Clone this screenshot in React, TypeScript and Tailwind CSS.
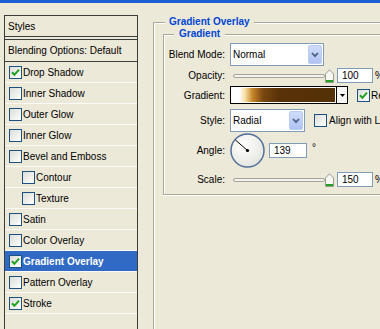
import React from "react";

function Check({ on }: { on?: boolean }) {
  return (
    <span className="w-[13px] h-[13px] shrink-0 border border-[#1c5180] bg-linear-to-br from-[#dcdcd7] to-white flex items-center justify-center">
      {on && (
        <svg width="9" height="9" viewBox="0 0 9 9">
          <path d="M1 4.2 L3.4 6.8 L8 1.6" stroke="#21a121" strokeWidth="2" fill="none" />
        </svg>
      )}
    </span>
  );
}

function Item({ label, on, indent, active }: { label: string; on?: boolean; indent?: boolean; active?: boolean }) {
  return (
    <div
      className={
        "h-[21px] flex items-center gap-[1px] border-b border-[#fbfbf7] " +
        (indent ? "pl-[17px] " : "pl-[4px] ") +
        (active ? "bg-[#316ac5] text-white font-bold" : "")
      }
    >
      <Check on={on} />
      <span className="whitespace-nowrap">{label}</span>
    </div>
  );
}

function Label({ children }: { children: React.ReactNode }) {
  return <div className="w-[61px] shrink-0 text-right whitespace-nowrap">{children}</div>;
}

function Combo({ text, w }: { text: string; w: string }) {
  return (
    <div className={w + " shrink-0 h-[23px] border border-[#7f9db9] bg-white flex items-center pl-[2px] pr-[1px]"}>
      <span>{text}</span>
      <span className="ml-auto w-[14px] h-[19px] rounded-[2px] border border-[#bccbf0] bg-linear-to-b from-[#cfdcfa] to-[#afc3f3] flex items-center justify-center">
        <svg width="8" height="6" viewBox="0 0 8 6">
          <path d="M1 1 L4 4.2 L7 1" stroke="#4d6185" strokeWidth="1.8" fill="none" />
        </svg>
      </span>
    </div>
  );
}

function Field({ value, w = "w-[36px]" }: { value: string; w?: string }) {
  return (
    <div className={w + " h-[15px] border border-[#7f9db9] bg-white flex items-center pl-[4px] leading-none"}>
      {value}
    </div>
  );
}

function Slider() {
  return (
    <div className="flex items-center ml-[3px] shrink-0">
      <div className="w-[92px] h-[4px] rounded-[2px] border border-[#a5a39c] bg-[#f4f3ee]" />
      <svg width="9" height="14" viewBox="0 0 9 14">
        <path d="M0.5 5 L4.5 0.8 L8.5 5 V13.5 H0.5 Z" fill="#f7f7f4" stroke="#9a9a92" />
        <rect x="1" y="11" width="7" height="2" fill="#21a121" />
      </svg>
    </div>
  );
}

export default function App() {
  const rows = [
    { label: "Drop Shadow", on: true },
    { label: "Inner Shadow" },
    { label: "Outer Glow" },
    { label: "Inner Glow" },
    { label: "Bevel and Emboss" },
    { label: "Contour", indent: true },
    { label: "Texture", indent: true },
    { label: "Satin" },
    { label: "Color Overlay" },
    { label: "Gradient Overlay", on: true, active: true },
    { label: "Pattern Overlay" },
    { label: "Stroke", on: true },
  ];

  return (
    <div className="w-[380px] h-[329px] overflow-hidden bg-[#ece9d8] text-black text-[10px] font-['Liberation_Sans',Arial,sans-serif]">
      <div className="h-[3px] bg-[#1f5fd6]" />
      <div className="flex items-start">
        {/* styles list */}
        <div className="shrink-0 ml-[4px] mt-[12px] w-[134px] h-[400px] border border-b-0 border-[#3c3c3c]">
          <div className="h-[21px] flex items-center pl-[3px] border-b border-[#3c3c3c]">Styles</div>
          <div className="mt-[2px] h-[23px] flex items-center pl-[3px] border-y border-[#3c3c3c] whitespace-nowrap">
            Blending Options: Default
          </div>
          {rows.map((r) => (
            <Item key={r.label} {...r} />
          ))}
        </div>

        {/* settings */}
        <fieldset className="shrink-0 ml-[15px] mt-[13px] w-[240px] h-[400px] border-t border-l border-[#aca899] shadow-[inset_1px_1px_0_#fff]">
          <legend className="ml-[11px] px-[4px] bg-[#ece9d8] font-bold text-[#0046d5] leading-[12px]">Gradient Overlay</legend>
          <fieldset className="ml-[9px] w-[300px] border-t border-l border-b border-[#aca899] shadow-[inset_1px_1px_0_#fff,0_1px_0_#fff] pt-[3px] pb-[6px]">
            <legend className="ml-[10px] px-[5px] bg-[#ece9d8] font-bold text-[#0046d5] leading-[12px]">Gradient</legend>

            <div className="h-[23px] flex items-center gap-[5px]">
              <Label>Blend Mode:</Label>
              <Combo text="Normal" w="w-[94px]" />
            </div>

            <div className="h-[19px] flex items-center gap-[5px]">
              <Label>Opacity:</Label>
              <div className="flex items-center">
                <Slider />
                <div className="ml-[3px]">
                  <Field value="100" />
                </div>
                <span className="ml-[2px]">%</span>
              </div>
            </div>

            <div className="h-[20px] flex items-center gap-[5px]">
              <Label>Gradient:</Label>
              <div className="flex items-center">
                <div className="shrink-0 w-[107px] h-[18px] border border-black p-[1px] bg-white">
                  <div className="w-full h-full bg-[linear-gradient(to_right,#ffffff_0%,#ffffff_7%,#f3dc9e_13%,#c58428_20%,#7a4810_30%,#583208_45%,#553108_100%)]" />
                </div>
                <div className="shrink-0 w-[11px] h-[18px] border border-l-0 border-black bg-[#f6f6f3] flex items-center justify-center">
                  <svg width="5" height="3" viewBox="0 0 5 3">
                    <path d="M0 0 H5 L2.5 3 Z" fill="#000" />
                  </svg>
                </div>
                <span className="ml-[9px]">
                  <Check on />
                </span>
                <span className="ml-[1px] whitespace-nowrap">Reverse</span>
              </div>
            </div>

            <div className="mt-[4px] h-[23px] flex items-center gap-[5px]">
              <Label>Style:</Label>
              <div className="flex items-center">
                <Combo text="Radial" w="w-[75px]" />
                <span className="ml-[9px]">
                  <Check />
                </span>
                <span className="ml-[2px] whitespace-nowrap">Align with Layer</span>
              </div>
            </div>

            <div className="h-[37px] flex items-center gap-[5px]">
              <Label>Angle:</Label>
              <div className="flex items-center">
                <svg width="35" height="35" viewBox="0 0 35 35" className="shrink-0">
                  <defs>
                    <radialGradient id="dial" cx="40%" cy="35%" r="70%">
                      <stop offset="0%" stopColor="#ffffff" />
                      <stop offset="100%" stopColor="#e4e4de" />
                    </radialGradient>
                  </defs>
                  <circle cx="17.5" cy="17.5" r="16.5" fill="url(#dial)" stroke="#53709c" strokeWidth="1.5" />
                  <line x1="17.5" y1="17.5" x2="5.4" y2="7" stroke="#000" strokeWidth="1" />
                  <circle cx="17.5" cy="17.5" r="1.6" fill="#000" />
                </svg>
                <div className="ml-[4px]">
                  <Field value="139" w="w-[38px]" />
                </div>
                <span className="ml-[5px] -mt-[6px]">°</span>
              </div>
            </div>

            <div className="mt-[2px] h-[17px] flex items-center gap-[5px]">
              <Label>Scale:</Label>
              <div className="flex items-center">
                <Slider />
                <div className="ml-[3px]">
                  <Field value="150" />
                </div>
                <span className="ml-[2px]">%</span>
              </div>
            </div>
          </fieldset>
        </fieldset>
      </div>
    </div>
  );
}
